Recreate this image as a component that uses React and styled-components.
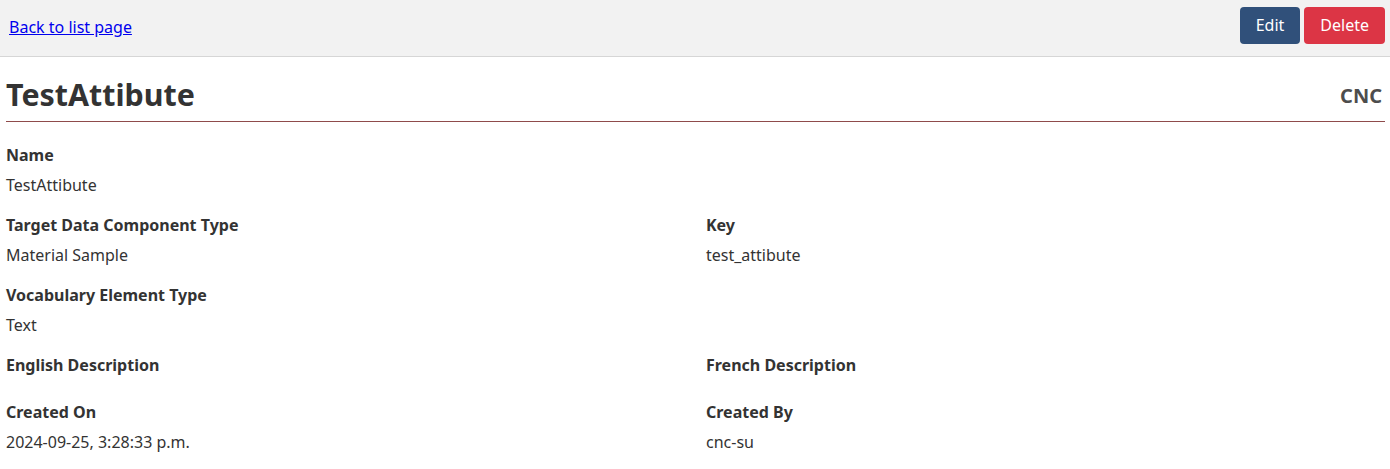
import React from "react";
import styled, { createGlobalStyle } from "styled-components";

const GlobalStyle = createGlobalStyle`
  body {
    margin: 0;
    font-family: "Noto Sans", "Open Sans", sans-serif;
    font-size: 16px;
    color: #333;
    background: #fff;
  }
`;

const TopBar = styled.div`
  display: flex;
  align-items: center;
  justify-content: space-between;
  height: 56px;
  padding: 0 5px 0 9px;
  background: #f2f2f2;
  border-bottom: 1px solid #d6d6d6;
`;

const BackLink = styled.a`
  color: #0000ee;
  text-decoration: underline;
  font-size: 16px;
  margin-bottom: 2px;
`;

const ButtonGroup = styled.div`
  display: flex;
  gap: 4px;
  margin-bottom: 5px;
`;

const Button = styled.button`
  font-family: inherit;
  font-size: 16px;
  line-height: 24px;
  padding: 6px 16px 7px;
  border: none;
  border-radius: 4px;
  color: #fff;
  background: ${props => props.danger ? "#dc3545" : "#30507a"};
  cursor: pointer;
`;

const Main = styled.main`
  padding: 0 5px 0 6px;
`;

const TitleRow = styled.div`
  display: flex;
  align-items: center;
  justify-content: space-between;
  margin-top: 18px;
  padding-bottom: 6px;
  border-bottom: 1px solid #8f4b4b;
`;

const Title = styled.h1`
  margin: 0;
  font-size: 30.4px;
  line-height: 40px;
  font-weight: 700;
  color: #333;
`;

const Group = styled.span`
  font-size: 20px;
  font-weight: 700;
  color: #4d4d4d;
  padding-right: 3px;
`;

const Fields = styled.div`
  display: grid;
  grid-template-columns: 700px 1fr;
  margin-top: 21px;
`;

const Field = styled.div`
  grid-column: ${props => props.col || "auto"};
  margin-bottom: 16px;
`;

const Label = styled.div`
  font-weight: 700;
  line-height: 24px;
  margin-bottom: 6px;
`;

const Value = styled.div`
  line-height: 24px;
  min-height: ${props => props.empty ? "1px" : "24px"};
`;

export default function App() {
  return (
    <>
      <GlobalStyle />
      <TopBar>
        <BackLink href="#">Back to list page</BackLink>
        <ButtonGroup>
          <Button>Edit</Button>
          <Button danger>Delete</Button>
        </ButtonGroup>
      </TopBar>
      <Main>
        <TitleRow>
          <Title>TestAttibute</Title>
          <Group>CNC</Group>
        </TitleRow>
        <Fields>
          <Field col="1">
            <Label>Name</Label>
            <Value>TestAttibute</Value>
          </Field>
          <Field col="1">
            <Label>Target Data Component Type</Label>
            <Value>Material Sample</Value>
          </Field>
          <Field col="2">
            <Label>Key</Label>
            <Value>test_attibute</Value>
          </Field>
          <Field col="1">
            <Label>Vocabulary Element Type</Label>
            <Value>Text</Value>
          </Field>
          <Field col="1">
            <Label>English Description</Label>
            <Value empty />
          </Field>
          <Field col="2">
            <Label>French Description</Label>
            <Value empty />
          </Field>
          <Field col="1">
            <Label>Created On</Label>
            <Value>2024-09-25, 3:28:33 p.m.</Value>
          </Field>
          <Field col="2">
            <Label>Created By</Label>
            <Value>cnc-su</Value>
          </Field>
        </Fields>
      </Main>
    </>
  );
}
